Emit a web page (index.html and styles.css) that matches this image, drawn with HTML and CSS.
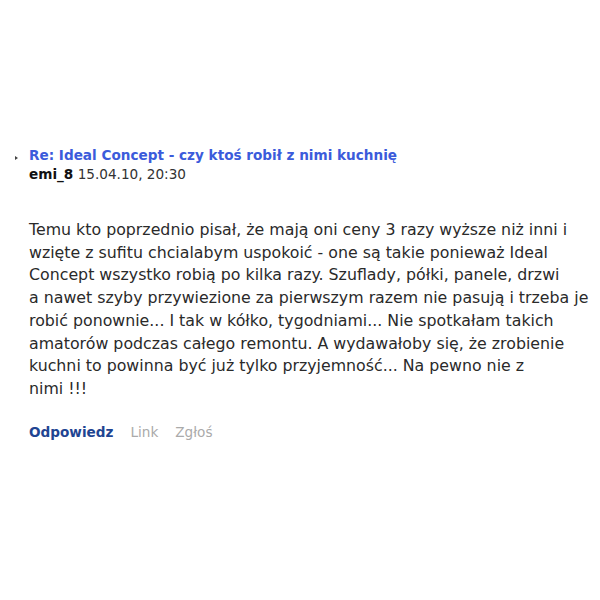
FILE: index.html
```html
<!DOCTYPE html>
<html lang="pl">
<head>
<meta charset="utf-8">
<link rel="stylesheet" href="styles.css">
</head>
<body>
<div class="post">
  <div class="head">
    <span class="bullet"></span>
    <div class="meta">
      <a class="title">Re: Ideal Concept - czy ktoś robił z nimi kuchnię</a>
      <div class="byline"><b class="author">emi_8</b> <span class="date">15.04.10, 20:30</span></div>
    </div>
  </div>
  <p class="text">Temu kto poprzednio pisał, że mają oni ceny 3 razy wyższe niż inni i<br>wzięte z sufitu chcialabym uspokoić - one są takie ponieważ Ideal<br>Concept wszystko robią po kilka razy. Szuflady, półki, panele, drzwi<br>a nawet szyby przywiezione za pierwszym razem nie pasują i trzeba je<br>robić ponownie... I tak w kółko, tygodniami... Nie spotkałam takich<br>amatorów podczas całego remontu. A wydawałoby się, że zrobienie<br>kuchni to powinna być już tylko przyjemność... Na pewno nie z<br>nimi !!!</p>
  <div class="actions">
    <a class="reply">Odpowiedz</a>
    <a class="muted">Link</a>
    <a class="muted">Zgłoś</a>
  </div>
</div>
</body>
</html>
```
FILE: styles.css
```css
html, body { margin: 0; padding: 0; background: #fff; }
body { font-family: "DejaVu Sans", Verdana, sans-serif; color: #2a2a2a; }
.post { padding: 146px 0 0 15px; }
.head { display: flex; align-items: flex-start; }
.bullet { width: 0; height: 0; border-left: 3px solid #444; border-top: 2px solid transparent; border-bottom: 2px solid transparent; margin: 10px 11px 0 0; }
.meta { display: flex; flex-direction: column; }
.title { color: #3b5bdb; font-weight: bold; font-size: 13.6px; line-height: 19px; }
.byline { font-size: 13.6px; line-height: 19px; }
.author { color: #111; }
.date { color: #333; }
.text { margin: 35px 0 0 14px; font-size: 15.8px; line-height: 22.7px; white-space: nowrap; }
.actions { margin: 23px 0 0 14px; display: flex; gap: 17px; font-size: 13.6px; }
.reply { color: #1f4592; font-weight: bold; }
.muted { color: #aaa; }
```
